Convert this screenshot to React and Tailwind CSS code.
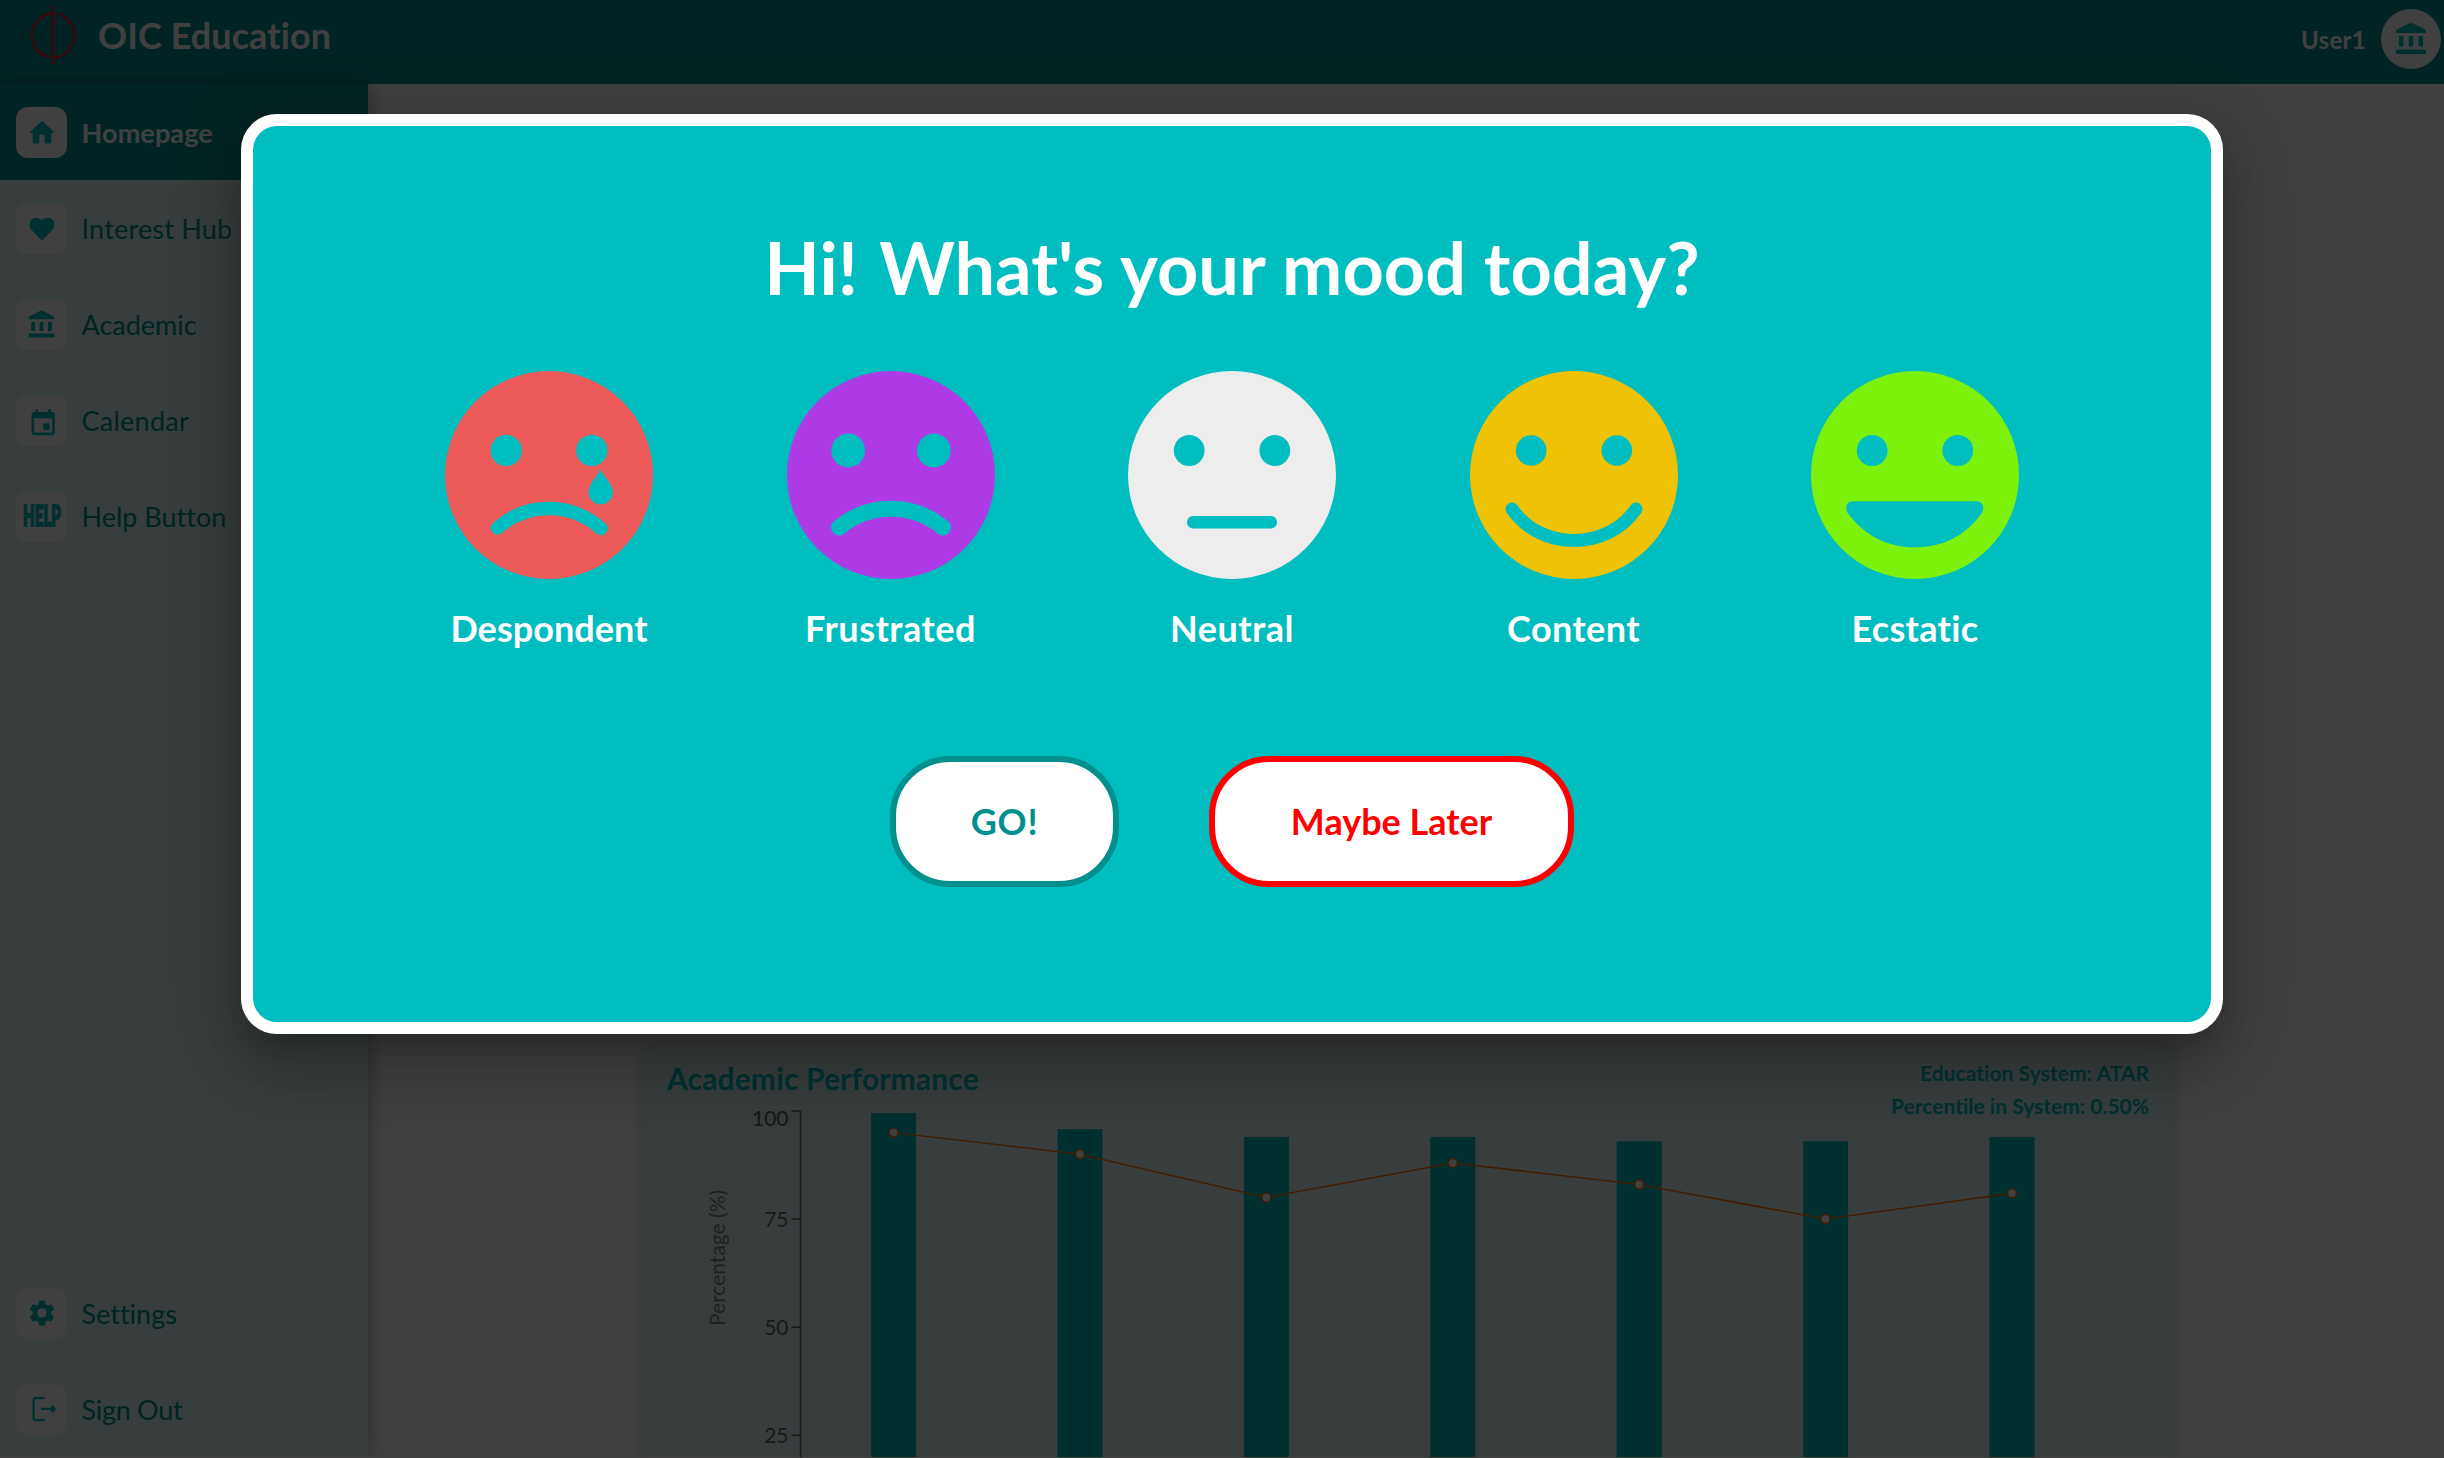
import React from "react";
import { MdAccountBalance, MdSettings, MdEvent } from "react-icons/md";

const FACE_BG = "#00bdbf";

function HomeIcon() {
  return (
    <svg width="26" height="26" viewBox="0 0 26 26" fill="currentColor" className="translate-y-[0.7px]">
      <path d="M12.2 1.6q.8-.7 1.6 0L25 12.2q.5.9-.5 1h-2.200V22.500q0 1.200-1.200 1.200h-4.500q-1 0-1-1v-6.700q0-1-1-1h-3.200q-1 0-1 1v6.700q0 1-1 1H4.900q-1.200 0-1.200-1.200V13.200H1.500q-1-.1-.5-1z" />
    </svg>
  );
}

function HeartIcon() {
  return (
    <svg width="26" height="26" viewBox="0 0 26 26" fill="currentColor" className="translate-y-[1.3px]">
      <path d="M13 24.400L2.700 13.900C-.8 9.800.3 4.300 4 2.300 7.300.7 11 1.700 13 4.300 15 1.700 18.700.7 22 2.300c3.700 2 4.800 7.500 1.300 11.600z" />
    </svg>
  );
}

function SignOutIcon() {
  return (
    <svg width="26" height="26" viewBox="0 0 26 26" fill="none" stroke="currentColor" strokeWidth="2.300" className="translate-x-[1.600px]">
      <path d="M14 2.200H5q-2 0-2 2v18q0 2 2 2h9" />
      <path d="M10.500 12.900h11" />
      <path d="M20.800 8.200l5.200 4.700-5.200 4.700z" fill="currentColor" stroke="none" />
    </svg>
  );
}

function HelpIcon() {
  return (
    <span className="inline-block -translate-y-[1px] scale-x-[0.54] text-[28px] leading-none font-black [-webkit-text-stroke:2px_currentColor]">
      HELP
    </span>
  );
}

const topItems = [
  { label: "Homepage", icon: <HomeIcon />, active: true, track: 0.12 },
  { label: "Interest Hub", icon: <HeartIcon />, track: 0.2 },
  { label: "Academic", icon: <MdAccountBalance size={31} />, track: 0 },
  { label: "Calendar", icon: <MdEvent size={31} className="translate-x-[1.700px] translate-y-[3px]" />, track: 0.25 },
  { label: "Help Button", icon: <HelpIcon />, track: 0 },
];

const bottomItems = [
  { label: "Settings", icon: <MdSettings size={31} className="translate-x-[0.5px] -translate-y-[0.5px]" />, track: 0 },
  { label: "Sign Out", icon: <SignOutIcon />, track: -0.3 },
];

function NavItem({ label, icon, active, track }) {
  return (
    <div
      className={
        active
          ? "flex h-24 items-center bg-[#008f8c] pl-4 text-[27px] font-bold text-white"
          : "flex h-24 items-center pl-4 text-[27px] text-[#008f8c]"
      }
    >
      <div className="flex size-[51px] shrink-0 items-center justify-center rounded-xl bg-white text-[#00bdbf]">
        {icon}
      </div>
      <span className="ml-[14.5px] leading-none whitespace-nowrap" style={{ letterSpacing: track }}>{label}</span>
    </div>
  );
}

function Header() {
  return (
    <header className="flex h-[84px] shrink-0 items-center bg-[#008f8c] text-white">
      <svg width="60" height="70" viewBox="0 0 60 70" fill="none" stroke="#dc1e32" strokeWidth="2.500" className="ml-[23px] -translate-y-[7px]">
        <path d="M30 5.500v59.500" strokeWidth="2.800" />
        <path d="M30 13a22.200 22.200 0 0 0-3 44" />
        <path d="M33.500 13.400A22.200 22.200 0 0 1 30 57.400" />
      </svg>
      <h1 className="ml-[15px] -translate-y-[7px] text-[36px] leading-none font-bold tracking-[0.08px]">OIC Education</h1>
      <span className="ml-auto -translate-y-[2px] text-[24px] leading-none font-bold tracking-[0.3px]">User1</span>
      <div className="mr-[3px] ml-[15px] flex size-[60px] -translate-y-[3px] items-center justify-center rounded-full bg-white text-[#00bdbf]">
        <MdAccountBalance size={36} />
      </div>
    </header>
  );
}

const bars = [99.5, 95.8, 94, 94, 93, 93, 94];
const line = [95, 90, 80, 88, 83, 75, 81];
const barX = (i) => 250.600 + i * 186.400;
const valueY = (v) => (100 - v) * 4.324 + 4;

function Chart() {
  const ticks = [100, 75, 50, 25];
  return (
    <svg width="1530" height="460" viewBox="0 0 1530 460" className="mt-[8px] -ml-6 block overflow-visible" fontSize="21">
      <text transform="translate(82 219) rotate(-90)" fill="#808080">Percentage (%)</text>
      {ticks.map((t) => (
        <g key={t}>
          <path d={`M148.500 ${valueY(t)}h9`} stroke="#666" strokeWidth="1.500" />
          <text x="145.500" y={valueY(t) + (t === 100 ? 15 : 7.500)} textAnchor="end" fill="#666">{t}</text>
        </g>
      ))}
      <path d={`M157.500 ${valueY(100)}V${valueY(0)}`} stroke="#666" strokeWidth="1.500" />
      {bars.map((v, i) => (
        <rect key={i} x={barX(i) - 22.500} y={valueY(v)} width="45" height={valueY(0) - valueY(v)} fill="#00bdbf" />
      ))}
      <polyline points={line.map((v, i) => `${barX(i)},${valueY(v)}`).join(" ")} fill="none" stroke="#ff7300" strokeWidth="1.500" />
      {line.map((v, i) => (
        <circle key={i} cx={barX(i)} cy={valueY(v)} r="4.500" fill="#fff" stroke="#ff7300" strokeWidth="1.500" />
      ))}
    </svg>
  );
}

function PerformanceCard() {
  return (
    <section className="mt-[960px] ml-[275px] w-[1530px] rounded-[18px] bg-[#e0f5f4] px-6 pt-[12px] shadow-[0_0_15px_rgba(0,0,0,0.2)]">
      <div className="flex h-[43px] justify-between font-bold text-[#00bdbf]">
        <h2 className="pt-[4px] text-[30px] leading-[36px] tracking-[0.14px]">Academic Performance</h2>
        <div className="text-right text-[21px] leading-[33px]">
          <p className="tracking-[0.05px]">Education System: ATAR</p>
          <p>Percentile in System: 0.50%</p>
        </div>
      </div>
      <Chart />
    </section>
  );
}

const moods = [
  {
    label: "Despondent",
    color: "#ed5a5a",
    eye: 15.7,
    track: 0.04,
    features: (
      <>
        <path d="M155.600 98.300C158 105 168 113 168 121a12.300 12.300 0 0 1-24.600 0C143.400 113 153 105 155.600 98.300z" fill={FACE_BG} />
        <path d="M52.500 157C82 131 126 131 156 157.500" fill="none" stroke={FACE_BG} strokeWidth="13.500" strokeLinecap="round" />
      </>
    ),
  },
  {
    label: "Frustrated",
    color: "#ae3be6",
    eye: 16.9,
    track: 0.5,
    features: <path d="M52 156.500C82 131.500 126 131.500 156 156.500" fill="none" stroke={FACE_BG} strokeWidth="16" strokeLinecap="round" />,
  },
  {
    label: "Neutral",
    color: "#ededed",
    eye: 15.4,
    track: 0.5,
    features: <rect x="59" y="145" width="90" height="12.600" rx="6" fill={FACE_BG} />,
  },
  {
    label: "Content",
    color: "#efc304",
    eye: 15.3,
    track: 0.4,
    features: <path d="M42 138C71 180 137 180 166 138" fill="none" stroke={FACE_BG} strokeWidth="13" strokeLinecap="round" />,
  },
  {
    label: "Ecstatic",
    color: "#7cf20c",
    eye: 15.4,
    track: 0.3,
    features: <path d="M41.500 130.300H166c5 0 8 6 5 11.500C153.500 166 131 176.300 104 176.300S54.500 166 36.500 141.800c-3-5.500 0-11.500 5-11.500z" fill={FACE_BG} />,
  },
];

function Mood({ label, color, eye, track, features }) {
  return (
    <button className="flex w-[341.500px] flex-col items-center">
      <svg width="208" height="208" viewBox="0 0 208 208">
        <circle cx="104" cy="104" r="104" fill={color} />
        <circle cx="61.200" cy="79.500" r={eye} fill={FACE_BG} />
        <circle cx="146.800" cy="79.500" r={eye} fill={FACE_BG} />
        {features}
      </svg>
      <span className="mt-[27px] text-[36px] leading-[44px] font-bold text-white" style={{ letterSpacing: track }}>{label}</span>
    </button>
  );
}

function MoodDialog() {
  return (
    <div className="absolute top-[114px] left-[241px] flex h-[920px] w-[1982px] flex-col items-center rounded-[36px] border-12 border-white bg-[#00bdbf] shadow-[0_16px_22px_-10px_rgba(0,0,0,0.2),0_36px_57px_4px_rgba(0,0,0,0.14),0_14px_69px_12px_rgba(0,0,0,0.12)]">
      <h2 className="mt-[97px] text-[72px] leading-[88px] font-bold tracking-[0.08px] text-white">
        <span className="mr-[4px]">Hi!</span> What's your mood today?
      </h2>
      <div className="mt-[59.5px] flex">
        {moods.map((m) => (
          <Mood key={m.label} {...m} />
        ))}
      </div>
      <div className="mt-[106px] flex gap-[90px] text-[36px] font-bold">
        <button className="h-[131px] w-[229px] rounded-[60px] border-6 border-[#008f8c] bg-white tracking-[0.8px] text-[#008f8c]">GO!</button>
        <button className="h-[131px] w-[365px] rounded-[60px] border-6 border-[#ff0000] bg-white text-[#ff0000]">Maybe Later</button>
      </div>
    </div>
  );
}

export default function App() {
  return (
    <div className="relative h-[1458px] w-[2444px] overflow-hidden bg-white font-['Lato',sans-serif] [font-variant-ligatures:none]">
      <div className="flex h-[1457px] flex-col overflow-hidden">
        <Header />
        <div className="flex min-h-0 flex-1">
          <aside className="relative flex w-[368px] shrink-0 flex-col justify-between bg-[#e0f5f4] shadow-[0_0_18px_rgba(0,0,0,0.35)]">
            <nav>
              {topItems.map((item) => (
                <NavItem key={item.label} {...item} />
              ))}
            </nav>
            <nav>
              {bottomItems.map((item) => (
                <NavItem key={item.label} {...item} />
              ))}
            </nav>
          </aside>
          <main className="min-w-0 flex-1 bg-white">
            <PerformanceCard />
          </main>
        </div>
      </div>
      <div className="absolute inset-0 bg-black/75" />
      <MoodDialog />
    </div>
  );
}
